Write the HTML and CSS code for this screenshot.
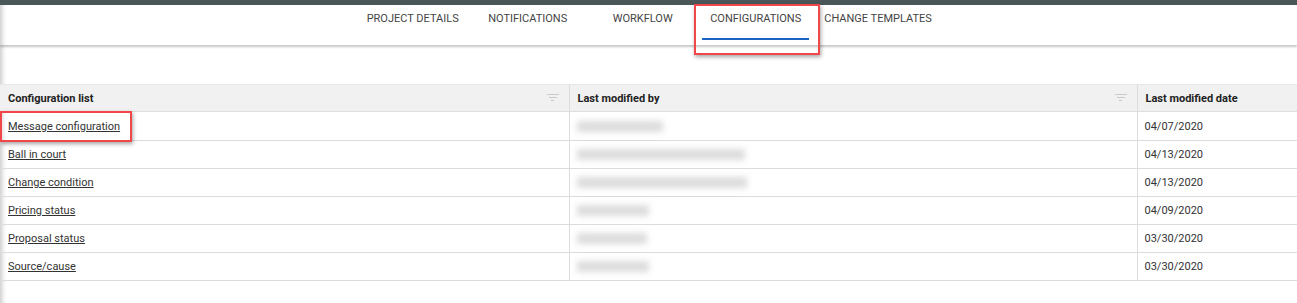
FILE: index.html
```html
<!DOCTYPE html>
<html lang="en">
<head>
  <meta charset="UTF-8">
  <title>Configurations</title>
  <link rel="stylesheet" href="styles.css">
</head>
<body>
  <div class="topbar"></div>

  <div class="page">
    <nav class="tabs">
      <a class="tab">PROJECT DETAILS</a>
      <a class="tab">NOTIFICATIONS</a>
      <a class="tab">WORKFLOW</a>
      <a class="tab active">CONFIGURATIONS<span class="mark"></span></a>
      <a class="tab wide">CHANGE TEMPLATES</a>
    </nav>

    <table class="grid">
      <colgroup>
        <col class="c1">
        <col class="c2">
        <col class="c3">
      </colgroup>
      <thead>
        <tr>
          <th>Configuration list<span class="filter"><i></i><i></i><i></i></span></th>
          <th>Last modified by<span class="filter"><i></i><i></i><i></i></span></th>
          <th>Last modified date</th>
        </tr>
      </thead>
      <tbody>
        <tr class="first">
          <td><a class="link mark-link">Message configuration<span class="mark-box"></span></a></td>
          <td><span class="blur" style="width: 86px"></span></td>
          <td>04/07/2020</td>
        </tr>
        <tr>
          <td><a class="link">Ball in court</a></td>
          <td><span class="blur" style="width: 168px"></span></td>
          <td>04/13/2020</td>
        </tr>
        <tr>
          <td><a class="link">Change condition</a></td>
          <td><span class="blur" style="width: 170px"></span></td>
          <td>04/13/2020</td>
        </tr>
        <tr>
          <td><a class="link">Pricing status</a></td>
          <td><span class="blur" style="width: 72px"></span></td>
          <td>04/09/2020</td>
        </tr>
        <tr>
          <td><a class="link">Proposal status</a></td>
          <td><span class="blur" style="width: 70px"></span></td>
          <td>03/30/2020</td>
        </tr>
        <tr>
          <td><a class="link">Source/cause</a></td>
          <td><span class="blur" style="width: 72px"></span></td>
          <td>03/30/2020</td>
        </tr>
      </tbody>
    </table>
  </div>
</body>
</html>
```

FILE: styles.css
```css
body {
  margin: 0;
  font-family: Roboto, 'Liberation Sans', Arial, sans-serif;
  font-size: 11px;
  color: #333;
  background: #fff;
}

.topbar {
  height: 5px;
  background-color: #4b5659;
}

.page {
  min-height: 298px;
  box-shadow: inset 6px 0 5px -4px rgba(0, 0, 0, 0.22);
}

.tabs {
  display: flex;
  justify-content: center;
  height: 40px;
  box-shadow: 0 2px 2px rgba(0, 0, 0, 0.22);
}

.tab {
  position: relative;
  min-width: 115px;
  padding: 7px 10px 0;
  box-sizing: border-box;
  text-align: center;
  color: #444;
  cursor: pointer;
}

.tab.active {
  min-width: 110px;
}

.tab.wide {
  min-width: 0;
  padding: 7px 10px 0 13px;
}

.tab .mark {
  position: absolute;
  left: 2px;
  right: 2px;
  top: 33px;
  height: 2px;
  background-color: #1b63c3;
}

.tab.active::after {
  content: '';
  position: absolute;
  left: -6px;
  right: -9px;
  top: -1px;
  height: 47px;
  border: 2px solid #f1474b;
  box-shadow: 1px 2px 4px rgba(0, 0, 0, 0.35);
}

.grid {
  width: 100%;
  margin-top: 39px;
  border-collapse: collapse;
  table-layout: fixed;
}

.grid .c1 { width: 569px; }
.grid .c2 { width: 568px; }

.grid th {
  position: relative;
  height: 26px;
  padding: 0 8px;
  background-color: #f1f1f1;
  border-top: 1px solid #e6e6e6;
  border-bottom: 1px solid #dedede;
  border-left: 1px solid #dcdcdc;
  text-align: left;
  font-weight: bold;
  color: #222;
}

.grid th:first-child,
.grid td:first-child {
  border-left: none;
}

.grid td {
  height: 27px;
  padding: 0 8px 0 7px;
  border-bottom: 1px solid #dcdcdc;
  border-left: 1px solid #dcdcdc;
  vertical-align: middle;
}

.grid .first td {
  height: 28px;
}

.grid td:first-child {
  padding-left: 8px;
}

.filter {
  position: absolute;
  right: 10px;
  top: 9px;
  display: flex;
  flex-direction: column;
  align-items: center;
  gap: 2px;
}

.filter i {
  display: block;
  height: 1px;
  background-color: #c9c9c9;
}

.filter i:nth-child(1) { width: 12px; }
.filter i:nth-child(2) { width: 8px; }
.filter i:nth-child(3) { width: 3px; }

.link {
  color: #333;
  text-decoration: underline;
  cursor: pointer;
}

.mark-link {
  position: relative;
}

.mark-box {
  position: absolute;
  left: -8px;
  right: -12px;
  top: -9px;
  bottom: -9px;
  border: 2px solid #f1474b;
  box-shadow: 1px 2px 4px rgba(0, 0, 0, 0.35);
}

.blur {
  display: block;
  height: 11px;
  background-color: #dcdcdc;
  filter: blur(3px);
}
```
